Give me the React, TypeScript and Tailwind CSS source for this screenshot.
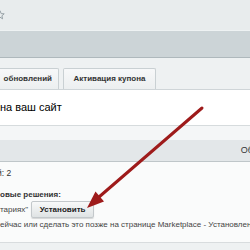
import React from "react";

function Star() {
  return (
    <svg width="10" height="10" viewBox="0 0 10 10" className="-ml-[5px]">
      <path
        d="M5 0.8 L6.2 3.6 L9.2 3.8 L6.9 5.8 L7.6 8.8 L5 7.2 L2.4 8.8 L3.1 5.8 L0.8 3.8 L3.8 3.6 Z"
        fill="none"
        stroke="#8f9a9f"
        strokeWidth="0.9"
      />
    </svg>
  );
}

function Arrow() {
  return (
    <svg className="absolute left-0 top-0 pointer-events-none" width="250" height="250" viewBox="0 0 250 250">
      <line x1="202" y1="108" x2="99" y2="197" stroke="#9e1b1b" strokeWidth="3" strokeLinecap="round" />
      <polygon points="87,208 104,201.5 95.5,191.5" fill="#9e1b1b" />
    </svg>
  );
}

export default function App() {
  return (
    <div className="relative w-[250px] h-[250px] overflow-hidden bg-[#eef1f2] font-['Liberation_Sans',Arial,sans-serif] text-[#333]">
      {/* top bar */}
      <div className="h-[30px] bg-[#e8eced] flex items-center">
        <Star />
      </div>
      <div className="h-[28px] bg-[#ccd4d7] border-t border-[#eef2f3] border-b border-b-[#aeb8bc]" />

      {/* tabs */}
      <div className="h-[31px] bg-[#eef1f2] flex items-end gap-[4px]">
        <div className="w-[59px] h-[21px] bg-gradient-to-b from-[#f7f8f9] to-[#eceff0] border border-b-0 border-l-0 border-[#c9d0d3] rounded-tr-[2px] flex items-center justify-end pr-[6px] text-[8px] font-bold text-[#333] whitespace-nowrap">
          обновлений
        </div>
        <div className="w-[93px] h-[21px] bg-gradient-to-b from-[#f7f8f9] to-[#eceff0] border border-b-0 border-[#c9d0d3] rounded-t-[2px] flex items-center justify-center text-[8px] font-bold text-[#333] whitespace-nowrap">
          Активация купона
        </div>
      </div>

      {/* panel */}
      <div className="bg-white border-t border-[#cfd5d8]">
        <div className="h-[35px] flex items-center text-[11px] text-black whitespace-nowrap">
          на ваш сайт
        </div>
        <div className="h-[15px] bg-[#f4f6f7] border-t border-[#d6dbdd]" />
        <div className="h-[22px] bg-[#e3e7e9] border-b border-[#bfc6c9] flex items-center justify-end text-[9px] text-[#333] whitespace-nowrap">
          <span className="-mr-[3px]">Об</span>
        </div>
        <div className="h-[80px] bg-[#fafbfb] flex flex-col text-[8px] whitespace-nowrap">
          <div className="mt-[6px] h-[10px] flex items-center text-[8.5px]">
            <span className="-ml-[3px]">й: 2</span>
          </div>
          <div className="mt-[12px] h-[10px] flex items-center font-bold">овые решения:</div>
          <div className="mt-[1px] flex items-center gap-[3px]">
            <span className="text-[#444]">тариях"</span>
            <button className="h-[17px] w-[63px] rounded-[2px] border border-[#c3c8cb] bg-gradient-to-b from-[#f8f9f9] to-[#dfe3e4] shadow-[0_1px_1px_rgba(0,0,0,0.15)] text-[8px] font-bold text-[#222]">
              Установить
            </button>
          </div>
          <div className="mt-[2px] h-[10px] flex items-center text-[#444]">
            ейчас или сделать это позже на странице Marketplace - Установленные
          </div>
        </div>
        <div className="border-t border-[#d8dcde] bg-[#eef1f2] h-[8px]" />
      </div>

      <Arrow />
    </div>
  );
}
